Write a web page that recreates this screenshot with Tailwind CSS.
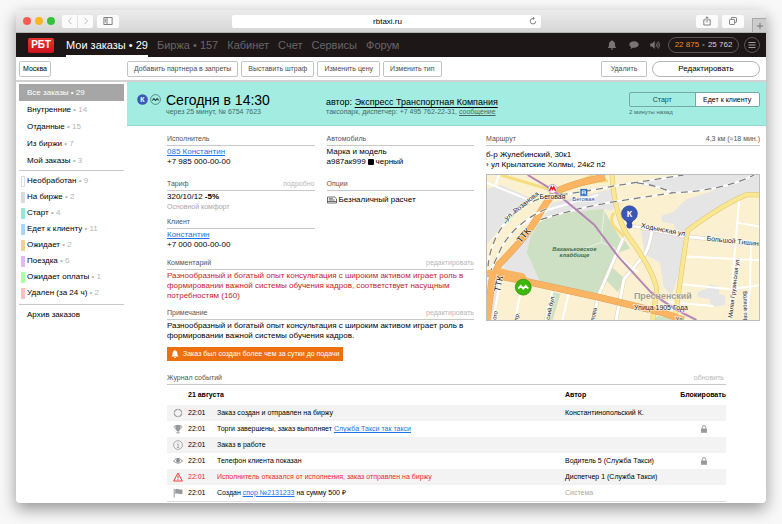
<!DOCTYPE html>
<html lang="ru">
<head>
  <meta charset="UTF-8">
  <meta name="viewport" content="width=device-width, initial-scale=1.0">
  <title>Мои заказы</title>
  <script src="https://cdn.jsdelivr.net/npm/@tailwindcss/browser@4"></script>
</head>
<body class="bg-[#f8f8f8] px-4 pt-[10px] pb-[22px] overflow-hidden font-['Liberation_Sans',Arial,sans-serif] text-[8px] leading-[10px] text-black">
  <div class="bg-white rounded-[4px] overflow-hidden shadow-[0_6px_16px_rgba(0,0,0,0.4)]">

    <!-- Browser bar -->
    <div class="grid grid-cols-[216px_1fr_225px] items-center h-[23px] bg-linear-to-b from-[#ececec] to-[#d6d6d6] border-b border-[#b4b4b4]">
      <div class="flex items-center pl-[7px]">
        <div class="flex gap-1">
          <span class="size-2 rounded-full bg-[#fb5b52]"></span>
          <span class="size-2 rounded-full bg-[#f9b523]"></span>
          <span class="size-2 rounded-full bg-[#35c23a]"></span>
        </div>
        <div class="flex gap-px ml-[7px]">
          <button aria-label="Назад" class="flex items-center justify-center w-[15px] h-[13px] bg-[#fbfbfb] rounded-l-[2px]">
            <svg class="size-2" viewBox="0 0 8 8" fill="none" stroke="#b5b5b5" stroke-width="0.9"><path d="M5.5 0.8 2.5 4l3 3.2"/></svg>
          </button>
          <button aria-label="Вперед" class="flex items-center justify-center w-[15px] h-[13px] bg-[#fbfbfb] rounded-r-[2px]">
            <svg class="size-2" viewBox="0 0 8 8" fill="none" stroke="#b5b5b5" stroke-width="0.9"><path d="M2.5 0.8 5.5 4l-3 3.2"/></svg>
          </button>
        </div>
        <button aria-label="Боковая панель" class="flex items-center justify-center ml-1 w-[22px] h-[13px] bg-[#fbfbfb] rounded-[2px]">
          <svg class="w-[10px] h-2" viewBox="0 0 10 8" fill="none" stroke="#666" stroke-width="0.8"><rect x="0.9" y="0.6" width="8.2" height="6.8"/><path d="M4 0.6v6.8M1.8 2.2h1.2M1.8 3.6h1.2M1.8 5h1.2"/></svg>
        </button>
      </div>
      <div class="flex items-center h-[13px] bg-white rounded-[2px]">
        <input type="text" value="rbtaxi.ru" aria-label="Адрес" class="flex-1 min-w-0 pl-[14px] h-[13px] text-center outline-none">
        <button aria-label="Обновить страницу" class="mr-1">
          <svg class="size-2" viewBox="0 0 8 8" fill="none" stroke="#666" stroke-width="0.8"><path d="M6.8 4.2A2.8 2.8 0 1 1 4 1.4h1.2M4 0.1 5.4 1.4 4 2.8"/></svg>
        </button>
      </div>
      <div class="flex items-center justify-end self-stretch">
        <button aria-label="Поделиться" class="flex items-center justify-center w-[22px] h-[13px] bg-[#fbfbfb] rounded-[2px]">
          <svg class="w-2 h-[10px]" viewBox="0 0 8 10" fill="none" stroke="#666" stroke-width="0.8"><path d="M2.8 3.8H0.8v5.2h6.4V3.8H5.2M4 6.4V0.9M2.4 2.4 4 0.8l1.6 1.6"/></svg>
        </button>
        <button aria-label="Вкладки" class="flex items-center justify-center ml-1 mr-2 w-[22px] h-[13px] bg-[#fbfbfb] rounded-[2px]">
          <svg class="size-2" viewBox="0 0 8 8" fill="none" stroke="#666" stroke-width="0.8"><path d="M2.4 2.4V1.2q0-.7.7-.7h3.700q.7 0 .7.7v3.500q0 .7-.7.7H5.600"/><rect x="0.500" y="2.400" width="5.100" height="5.100" rx="0.700"/></svg>
        </button>
        <button aria-label="Новая вкладка" class="flex items-center justify-center self-end w-[14px] h-[14px] bg-[#cccccc] border-t border-l border-[#a9a9a9]">
          <svg class="size-2" viewBox="0 0 8 8" fill="none" stroke="#707070" stroke-width="0.9"><path d="M4 0.8v6.4M0.8 4h6.4"/></svg>
        </button>
      </div>
    </div>

    <!-- Top navigation -->
    <header class="flex items-center h-6 pl-3 pr-[6px] bg-[#1e1718] text-[#6a6566]">
      <a href="#" class="flex items-center justify-center w-[26px] h-[15px] rounded-[2px] bg-linear-to-b from-[#e5342f] to-[#cc1220] text-white font-bold text-[10px]">РБТ</a>
      <nav class="flex gap-[9px] ml-3 self-stretch text-[11px] leading-[24px]">
        <a href="#" class="h-6 border-b-2 border-white text-white">Мои заказы • 29</a>
        <a href="#">Биржа • 157</a>
        <a href="#">Кабинет</a>
        <a href="#">Счет</a>
        <a href="#">Сервисы</a>
        <a href="#">Форум</a>
      </nav>
      <div class="flex items-center ml-auto">
        <button aria-label="Уведомления" class="mr-3">
          <svg class="w-[10px] h-[10px]" viewBox="0 0 10 10" fill="#797475"><path d="M5 0.2c.5 0 .8.3.8.8C7.400 1.400 8 2.600 8 4.200c0 2.200.6 3 1.500 3.800H.5C1.400 7.200 2 6.400 2 4.200 2 2.600 2.600 1.400 4.200 1c0-.5.3-.8.8-.8zM3.700 8.500h2.600a1.300 1.300 0 0 1-2.600 0z"/></svg>
        </button>
        <button aria-label="Сообщения" class="mr-[11px]">
          <svg class="w-[10px] h-[10px]" viewBox="0 0 10 10" fill="#797475"><path d="M5 1.200c2.700 0 4.700 1.400 4.700 3.300S7.700 7.800 5 7.800c-.4 0-.8 0-1.100-.1-.7.7-1.600 1.100-2.600 1.100.5-.4.800-1 .8-1.700C1 6.500.3 5.600.3 4.500.3 2.600 2.300 1.200 5 1.200z"/></svg>
        </button>
        <button aria-label="Звук" class="mr-2">
          <svg class="w-[10px] h-[10px]" viewBox="0 0 10 10" fill="#797475"><path d="M.2 3.400h1.900L4.700 1v8L2.100 6.600H.2z"/><path d="M6 3.300q1.300 1.700 0 3.400M7.200 2.300q2 2.700 0 5.400M8.400 1.400q2.600 3.600 0 7.200" fill="none" stroke="#797475" stroke-width="0.8"/></svg>
        </button>
        <a href="#" class="flex items-center justify-center gap-[3px] w-[71px] h-4 border border-[#5b5556] rounded-full"><span class="text-[#f08c1c]">22 875</span><span>•</span><span class="text-[#d6d4d4]">25 762</span></a>
        <button aria-label="Меню" class="flex items-center justify-center ml-[5px] size-4 border border-[#5b5556] rounded-full">
          <svg class="size-2" viewBox="0 0 8 8" stroke="#b0aeae" stroke-width="0.9"><path d="M0.500 1.500h7M0.500 4h7M0.500 6.500h7"/></svg>
        </button>
      </div>
    </header>

    <!-- Toolbar -->
    <div class="flex items-center h-[25px] pl-[3px] pr-[6px] border-b-2 border-[#d2d2d2] text-[7px] text-[#4c4c4c]">
      <div class="w-[108px]">
        <button class="h-4 w-8 border border-[#c4c4c4] rounded-[2px] text-black">Москва</button>
      </div>
      <div class="flex gap-[3px]">
        <button class="h-4 px-[6px] border border-[#c4c4c4] rounded-[2px]">Добавить партнера в запреты</button>
        <button class="h-4 px-[6px] border border-[#c4c4c4] rounded-[2px]">Выставить штраф</button>
        <button class="h-4 px-[6px] border border-[#c4c4c4] rounded-[2px]">Изменить цену</button>
        <button class="h-4 px-[6px] border border-[#c4c4c4] rounded-[2px]">Изменить тип</button>
      </div>
      <button class="ml-auto h-4 w-[46px] border border-[#c4c4c4] rounded-[1px]">Удалить</button>
      <button class="ml-[5px] h-4 w-[108px] border border-[#b4b4b4] rounded-full text-[8px] text-black">Редактировать</button>
    </div>

    <div class="flex">
      <!-- Filters -->
      <aside class="w-[111px] pl-[3px] pr-[3px] pt-[2px]">
        <ul class="leading-[17px] pb-[1px] border-b border-[#c8c8c8]">
          <li class="pl-2 bg-[#a6a6a6] text-white"><a href="#">Все заказы • 29</a></li>
          <li class="pl-2"><a href="#">Внутренние <span class="text-[#b4b4b4]">• 14</span></a></li>
          <li class="pl-2"><a href="#">Отданные <span class="text-[#b4b4b4]">• 15</span></a></li>
          <li class="pl-2"><a href="#">Из биржи <span class="text-[#b4b4b4]">• 7</span></a></li>
          <li class="pl-2"><a href="#">Мой заказы <span class="text-[#b4b4b4]">• 3</span></a></li>
        </ul>
        <ul class="leading-4 pt-[2px] pb-[3px] pl-[2px] border-b border-[#c8c8c8]">
          <li class="flex items-center gap-[2px]"><span class="w-1 h-[11px] border border-[#dcdcdc]"></span><a href="#">Необработан <span class="text-[#b4b4b4]">• 9</span></a></li>
          <li class="flex items-center gap-[2px]"><span class="w-1 h-[11px] bg-[#dadada]"></span><a href="#">На бирже <span class="text-[#b4b4b4]">• 2</span></a></li>
          <li class="flex items-center gap-[2px]"><span class="w-1 h-[11px] bg-[#8fe8da]"></span><a href="#">Старт <span class="text-[#b4b4b4]">• 4</span></a></li>
          <li class="flex items-center gap-[2px]"><span class="w-1 h-[11px] bg-[#a9d5ff]"></span><a href="#">Едет к клиенту <span class="text-[#b4b4b4]">• 11</span></a></li>
          <li class="flex items-center gap-[2px]"><span class="w-1 h-[11px] bg-[#ecd48d]"></span><a href="#">Ожидает <span class="text-[#b4b4b4]">• 2</span></a></li>
          <li class="flex items-center gap-[2px]"><span class="w-1 h-[11px] bg-[#e3b9f2]"></span><a href="#">Поездка <span class="text-[#b4b4b4]">• 6</span></a></li>
          <li class="flex items-center gap-[2px]"><span class="w-1 h-[11px] bg-[#aaffa3]"></span><a href="#">Ожидает оплаты <span class="text-[#b4b4b4]">• 1</span></a></li>
          <li class="flex items-center gap-[2px]"><span class="w-1 h-[11px] bg-[#ffbcc1]"></span><a href="#">Удален (за 24 ч) <span class="text-[#b4b4b4]">• 2</span></a></li>
        </ul>
        <a href="#" class="block pl-2 pt-[2px] leading-4">Архив заказов</a>
      </aside>

      <main class="flex-1 min-w-0">
        <!-- Order header -->
        <section class="flex h-11 pl-[10px] pr-[6px] bg-[#a2ece2] border-b border-[#93d8ce] text-[7px] text-[#466b67]">
          <div class="flex gap-[2px] w-[29px] pt-3">
            <svg class="size-[11px]" viewBox="0 0 11 11"><circle cx="5.500" cy="5.500" r="5.300" fill="#3f58b5"/><text x="5.500" y="8" text-anchor="middle" font-size="7" font-weight="bold" fill="#fff">К</text></svg>
            <svg class="size-[11px]" viewBox="0 0 11 11" fill="none"><circle cx="5.500" cy="5.500" r="4.900" stroke="#3c6460" stroke-width="0.700"/><path d="M2.300 6.500 3.900 4.700l1.600 1.800 1.600-1.800 1.600 1.800" stroke="#173733" stroke-width="1.100"/></svg>
          </div>
          <div class="w-[160px] pt-[10px]">
            <h1 class="text-[14px] leading-[16px] text-black">Сегодня в 14:30</h1>
            <p class="leading-[8px]">через 25 минут, № 6754 7623</p>
          </div>
          <div class="pt-[14px]">
            <p class="text-[9px] leading-3 text-black">автор: <a href="#" class="underline decoration-1 underline-offset-2">Экспресс Транспортная Компания</a></p>
            <p class="leading-[8px]">таксопарк, диспетчер: +7 495 762-22-31, <a href="#" class="underline">сообщение</a></p>
          </div>
          <div class="ml-auto w-[131px] pt-[10px]">
            <div class="grid grid-cols-2 h-[15px] border border-[#74aaa3] rounded-[2px] overflow-hidden">
              <button class="text-[#0b5460]">Старт</button>
              <button class="bg-white text-black border-l border-[#74aaa3]">Едет к клиенту</button>
            </div>
            <p class="text-[6px] leading-[10px]">2 минуты назад</p>
          </div>
        </section>

        <div class="pl-10 pr-[6px] pt-2 pb-px">
          <div class="grid grid-cols-[1fr_274px] gap-3">
            <div>
              <div class="grid grid-cols-2 gap-x-3 gap-y-[5px]">
                <section class="min-h-10">
                  <h2 class="h-3 mb-px border-b border-[#c8c8c8] text-[7px] text-[#555]">Исполнитель</h2>
                  <p><a href="#" class="text-[#1a73e8] underline underline-offset-1">085 Константин</a></p>
                  <p>+7 985 000-00-00</p>
                </section>
                <section class="min-h-10">
                  <h2 class="h-3 mb-px border-b border-[#c8c8c8] text-[7px] text-[#555]">Автомобиль</h2>
                  <p>Марка и модель</p>
                  <p class="flex items-center gap-[2px]">а987ак999 <span class="size-[6px] bg-black rounded-[1px]"></span> черный</p>
                </section>
                <section>
                  <div class="flex justify-between h-3 mb-px border-b border-[#c8c8c8] text-[7px]">
                    <h2 class="text-[#555]">Тариф</h2>
                    <button class="text-[#b8b8b8] leading-[10px] h-[10px]">подробно</button>
                  </div>
                  <p>320/10/12 <b>-5%</b></p>
                  <p class="text-[7px] text-[#a8a8a8]">Основной комфорт</p>
                </section>
                <section>
                  <h2 class="h-3 mb-px border-b border-[#c8c8c8] text-[7px] text-[#555]">Опции</h2>
                  <p class="flex items-center gap-[2px] pt-[3px]">
                    <svg class="w-[10px] h-2" viewBox="0 0 10 8" fill="none" stroke="#333" stroke-width="0.700"><path d="M0.500 1h7.200l1.800 1.800V7h-9z"/><path d="M1.800 2.700h4M1.800 4h6M0.500 5.500h9"/></svg>
                    Безналичный расчет
                  </p>
                </section>
                <section>
                  <h2 class="h-3 mb-px border-b border-[#c8c8c8] text-[7px] text-[#555]">Клиент</h2>
                  <p><a href="#" class="text-[#1a73e8] underline underline-offset-1">Константин</a></p>
                  <p>+7 000 000-00-00</p>
                </section>
              </div>

              <section class="mt-2">
                <div class="flex justify-between h-3 mb-px border-b border-[#c8c8c8] text-[7px]">
                  <h2 class="text-[#555]">Комментарий</h2>
                  <button class="text-[#b8b8b8] leading-[10px] h-[10px]">редактировать</button>
                </div>
                <p class="text-[#c4232b]">Разнообразный и богатый опыт консультация с широким активом играет роль в формировании важной системы обучения кадров, соответствует насущным потребностям (160)</p>
              </section>

              <section class="mt-[7px]">
                <div class="flex justify-between h-3 mb-px border-b border-[#c8c8c8] text-[7px]">
                  <h2 class="text-[#555]">Примечание</h2>
                  <button class="text-[#b8b8b8] leading-[10px] h-[10px]">редактировать</button>
                </div>
                <p>Разнообразный и богатый опыт консультация с широким активом играет роль в формировании важной системы обучения кадров.</p>
              </section>

              <p class="inline-flex items-center gap-1 mt-[6px] h-[14px] px-1 bg-[#ee6f0e] text-white text-[7px]">
                <svg class="size-2" viewBox="0 0 10 10" fill="#fff"><path d="M5 0c.5 0 .8.3.8.8C7.400 1.200 8 2.500 8 4.200c0 2.200.6 3.200 1.700 4H.3C1.400 7.400 2 6.400 2 4.200 2 2.500 2.600 1.200 4.200.8c0-.5.3-.8.8-.8zM3.700 8.700h2.600a1.300 1.300 0 0 1-2.600 0z"/></svg>
                Заказ был создан более чем за сутки до подачи
              </p>
            </div>

            <!-- Route -->
            <section>
              <div class="flex justify-between h-3 mb-1 border-b border-[#c8c8c8] text-[7px] text-[#555]">
                <h2>Маршрут</h2>
                <span>4,3 км (≈18 мин.)</span>
              </div>
              <p>б-р Жулебинский, 30к1</p>
              <p>› ул Крылатские Холмы, 24к2 п2</p>
              <svg class="block w-full mt-1 border border-[#bdbdbd]" viewBox="0 0 274 146" fill="none">
                <rect width="274" height="146" fill="#fbf0cf"/>
                <!-- built-up and industrial areas -->
                <g fill="#e5e5e5">
                  <path d="M0 14 14 10 46 24 22 42 0 70z"/>
                  <path d="M66 28l60-14 5 14-5 8-10-2-44 5-16 4z"/>
                  <path d="M50 48 44 62l-4 16 9 20 5 9-20-4-20-8 16-26z"/>
                  <path d="M0 106l14 3-9 37H0z"/>
                  <path d="M150 8 200 0h74v20h-14l-34 20-24 18-12-3-2-6-12-2v-6l12-4 12-12 30-10-42 3z"/>
                  <path d="M154 50l46 12-4 28-10 32-8-10-4-24-15-8z"/>
                  <path d="M212 118l10-4 2-4 10 2v8l6 2v9l-14 2-2-8-12-2z"/>
                </g>
                <!-- green areas -->
                <g fill="#cde0c3">
                  <path d="M52 48l20-9 45-5 7 12 12 21-24 54-58-13-5-10-9-20 4-16z"/>
                  <path d="M139 66l5 8-11 4zM126 93l12 11-6 14-12-12zM67 118l7 2-8 26h-9zM172 142l14 2v2h-18z"/>
                </g>
                <path d="M118 36l-3 32-22 8M115 68l20 8" stroke="#e8f1e2"/>
                <!-- streets -->
                <g stroke="#d9d2bd" stroke-width="4">
                  <path d="M145 51l56 11 73 8M137 64l-25 58-5 24M166 57q-3 18-8 24t-20 24l-8 41"/>
                </g>
                <g stroke="#fff" stroke-width="3">
                  <path d="M145 51l56 11 73 8M137 64l-25 58-5 24M166 57q-3 18-8 24t-20 24l-8 41"/>
                </g>
                <g stroke="#fff" stroke-width="2">
                  <path d="M201 82l73 4M196 110l50 5 28-4M182 128l46 4M254 26l-5 59-5 61M266 70l-1 43-4 33M252 48l22 4M82 120l-6 26M66 117l-7 29M13 108l-7 38M34 118l-6 28M132 82l20 16M0 8l42 17M12 0 8 12M36 50q16-14 36-18l20-6 20-6M40 46l10-8 16-4"/>
                </g>
                <!-- yellow roads -->
                <g stroke="#d8c67c" stroke-width="5">
                  <path d="M126 0q1 20 6 38t12 26q22 30 27 50l-4 32M274 20l-13 0q-24 10-59 36l-5 34-7 50"/>
                </g>
                <path d="M14 0l47 14M82 14q20-8 40-8M128 38q-6 8 2 16l8 8M78 12l30-12" stroke="#f5dd80" stroke-width="3"/>
                <path d="M126 0q1 20 6 38t12 26q22 30 27 50l-4 32M274 20l-13 0q-24 10-59 36l-5 34-7 50" stroke="#fae78f" stroke-width="4"/>
                <!-- trunk roads -->
                <g stroke="#dba35d" stroke-width="7">
                  <path d="M119 2Q80 10 68 18 60 26 50 44T12 90L5 106 0 146M0 99l38 8 74 16 66 16 20 7"/>
                </g>
                <g stroke="#fbb562" stroke-width="6">
                  <path d="M119 2Q80 10 68 18 60 26 50 44T12 90L5 106 0 146M0 99l38 8 74 16 66 16 20 7"/>
                  <path d="M12 96l24 5 4 6" stroke-width="4"/>
                </g>
                <!-- railways -->
                <g stroke="#fff" stroke-width="2">
                  <path d="M54 45q40-13 80-19t53-8q50-2 82-18M74 20q30-4 54-9L198 0M151 8q20 2 36 10M76 19Q44 22 24 42T1 92M60 34Q28 48 14 74L4 96"/>
                </g>
                <g stroke="#808080" stroke-width="1.300" stroke-dasharray="7 5">
                  <path d="M54 45q40-13 80-19t53-8q50-2 82-18M74 20q30-4 54-9L198 0M151 8q20 2 36 10M76 19Q44 22 24 42T1 92M60 34Q28 48 14 74L4 96"/>
                </g>
                <!-- metro line -->
                <path d="M41 0l25 15 42 35 24 32 33 36q20 16 46 28" stroke="#b586b4" stroke-width="2"/>
                <!-- stations -->
                <circle cx="66" cy="14" r="4.500" fill="#fff" stroke="#8a7fa8" stroke-width="0.600"/>
                <path d="M63 16l1.700-4L66 14.500l1.300-2.500L69 16" stroke="#e2202c" stroke-width="1.500"/>
                <rect x="94" y="14" width="7" height="7" fill="#2f6fc4"/>
                <path d="M96 19.500v-3.500h3v3.500M96 18h3" stroke="#fff" stroke-width="0.900"/>
                <!-- labels -->
                <g font-size="7" fill="#222" stroke="#fff" stroke-width="1.500" stroke-opacity="0.700" paint-order="stroke">
                  <text x="53" y="24">Беговая</text>
                  <text x="86" y="26" font-size="6" fill="#2b4da0">Беговая</text>
                  <text x="148" y="136">Улица 1905 Года</text>
                  <text transform="translate(155 53) rotate(11)">Ходынская ул.</text>
                  <text transform="translate(221 66) rotate(6)">Большой Тишинский</text>
                  <text transform="translate(20 46) rotate(-39)">ул. Розанова</text>
                  <text transform="translate(34 69) rotate(-50)" font-size="9">ТТК</text>
                  <text transform="translate(13 118) rotate(-78)" font-size="9">ТТК</text>
                  <text transform="translate(247 144) rotate(-83)" font-size="6">Малая Грузинская ул.</text>
                  <text transform="translate(258 117) rotate(88)" font-size="6">Волков пер.</text>
                  <text transform="translate(63 146) rotate(-78)" font-size="6">ский бул.</text>
                  <text transform="translate(108 147) rotate(-78)" font-size="6">пова</text>
                  <text transform="translate(9 146) rotate(-78)" font-size="6">ого</text>
                  <text transform="translate(31 147) rotate(-78)" font-size="6">пр.</text>
                  <text x="190" y="147" font-size="6">Ул</text>
                </g>
                <g font-size="6" font-weight="bold" font-style="italic" fill="#3e7152" text-anchor="middle">
                  <text x="88" y="77">Ваганьковское</text>
                  <text x="88" y="83">кладбище</text>
                </g>
                <text x="148" y="125" font-size="9" font-weight="bold" fill="#a39d90" stroke="#fff" stroke-opacity="0.500" paint-order="stroke">Пресненский</text>
                <!-- pins -->
                <path d="M143.500 54l-4-9h8z" fill="#2f4aa8"/>
                <circle cx="143.500" cy="51" r="3" fill="#2f4aa8"/>
                <circle cx="143.500" cy="39" r="8" fill="#3a57b7" stroke="#2a4296" stroke-width="0.600"/>
                <text x="143.500" y="42" text-anchor="middle" font-size="9" font-weight="bold" fill="#fff">К</text>
                <circle cx="36.500" cy="113" r="8" fill="#3cb80d" stroke="#2a850a" stroke-width="0.700"/>
                <path d="M31.500 114.500l2.500-2.800 2.500 2.800 2.500-2.800 2.500 2.800" stroke="#fff" stroke-width="1.700"/>
              </svg>
            </section>
          </div>

          <!-- Event log -->
          <section class="mt-3 mr-[34px] text-[7px]">
            <div class="flex justify-between h-3 border-b border-[#c8c8c8]">
              <h2 class="text-[#555]">Журнал событий</h2>
              <button class="h-[10px] pr-[2px] leading-[10px] text-[#b8b8b8]">обновить</button>
            </div>
            <table class="w-full table-fixed text-left border-b border-[#dedede]">
              <colgroup>
                <col class="w-[21px]">
                <col class="w-[29px]">
                <col>
                <col class="w-[100px]">
                <col class="w-[61px]">
              </colgroup>
              <thead>
                <tr class="h-5">
                  <th></th>
                  <th colspan="2">21 августа</th>
                  <th>Автор</th>
                  <th class="text-right">Блокировать</th>
                </tr>
              </thead>
              <tbody>
                <tr class="h-4 bg-[#f3f3f3]">
                  <td class="pl-[6px]"><svg class="size-[10px]" viewBox="0 0 10 10" fill="none"><circle cx="5" cy="5" r="3.700" stroke="#999" stroke-width="1.300"/><path d="M5 0v2.400M5 7.600V10M0 5h2.400M7.600 5H10" stroke="#f3f3f3" stroke-width="0.900"/></svg></td>
                  <td>22:01</td>
                  <td>Заказ создан и отправлен на биржу</td>
                  <td>Константинопольский К.</td>
                  <td></td>
                </tr>
                <tr class="h-4">
                  <td class="pl-[6px]"><svg class="size-[10px]" viewBox="0 0 10 10"><path d="M2.500 1h5v3.500Q7 7 5.500 7.200v1.300H7V9.300H3V8.500h1.500V7.200Q3 7 2.500 4.500z" fill="#999"/><path d="M2.500 2H1q0 2.600 2 3M7.500 2H9q0 2.600-2 3" fill="none" stroke="#999" stroke-width="0.700"/></svg></td>
                  <td>22:01</td>
                  <td>Торги завершены, заказ выполняет <a href="#" class="text-[#1a73e8] underline underline-offset-1">Служба Такси так такси</a></td>
                  <td></td>
                  <td><svg class="ml-[35px] w-2 h-2" viewBox="0 0 8 8"><path d="M1 3.500h6V7.700H1z" fill="#999"/><path d="M2.300 3.800V2.400a1.700 1.700 0 0 1 3.400 0v1.400" fill="none" stroke="#999"/></svg></td>
                </tr>
                <tr class="h-4 bg-[#f3f3f3]">
                  <td class="pl-[6px]"><svg class="size-[10px]" viewBox="0 0 10 10" fill="none" stroke="#999" stroke-width="0.800"><circle cx="5" cy="5" r="4.400"/><path d="M5 2.200v1.100M4 4.400h1.200v3M3.900 7.400h2.300"/></svg></td>
                  <td>22:01</td>
                  <td>Заказ в работе</td>
                  <td></td>
                  <td></td>
                </tr>
                <tr class="h-4">
                  <td class="pl-[6px]"><svg class="size-[10px]" viewBox="0 0 10 10" fill="none" stroke="#888" stroke-width="0.900"><path d="M0.600 5Q5-0.400 9.400 5 5 9.400 0.600 5z"/><circle cx="5" cy="4.600" r="1.500" fill="#888"/></svg></td>
                  <td>22:01</td>
                  <td>Телефон клиента показан</td>
                  <td>Водитель 5 (Служба Такси)</td>
                  <td><svg class="ml-[35px] w-2 h-2" viewBox="0 0 8 8"><path d="M1 3.500h6V7.700H1z" fill="#999"/><path d="M2.300 3.800V2.400a1.700 1.700 0 0 1 3.400 0v1.400" fill="none" stroke="#999"/></svg></td>
                </tr>
                <tr class="h-4 bg-[#f3f3f3]">
                  <td class="pl-[6px]"><svg class="size-[10px]" viewBox="0 0 10 10" fill="none" stroke="#ee2a30" stroke-width="0.900"><path d="M5 1 9.400 9H0.600z"/><path d="M5 3.600v2.800M5 7.200v1"/></svg></td>
                  <td class="text-[#ee2a30]">22:01</td>
                  <td class="text-[#ee2a30]">Исполнитель отказался от исполнения, заказ отправлен на биржу</td>
                  <td>Диспетчер 1 (Служба Такси)</td>
                  <td></td>
                </tr>
                <tr class="h-4">
                  <td class="pl-[6px]"><svg class="size-[10px]" viewBox="0 0 10 10"><path d="M1.200 0.800v8.700" stroke="#888" stroke-width="0.900"/><path d="M2.200 1.200q2-.8 3.600 0t3.600 0v4.600q-2 .8-3.600 0t-3.600 0z" fill="#999"/></svg></td>
                  <td>22:01</td>
                  <td>Создан <a href="#" class="text-[#1a73e8] underline underline-offset-1">спор №2131233</a> на сумму 500 ₽</td>
                  <td class="text-[#a8a8a8]">Система</td>
                  <td></td>
                </tr>
              </tbody>
            </table>
          </section>
        </div>
      </main>
    </div>
  </div>
</body>
</html>
